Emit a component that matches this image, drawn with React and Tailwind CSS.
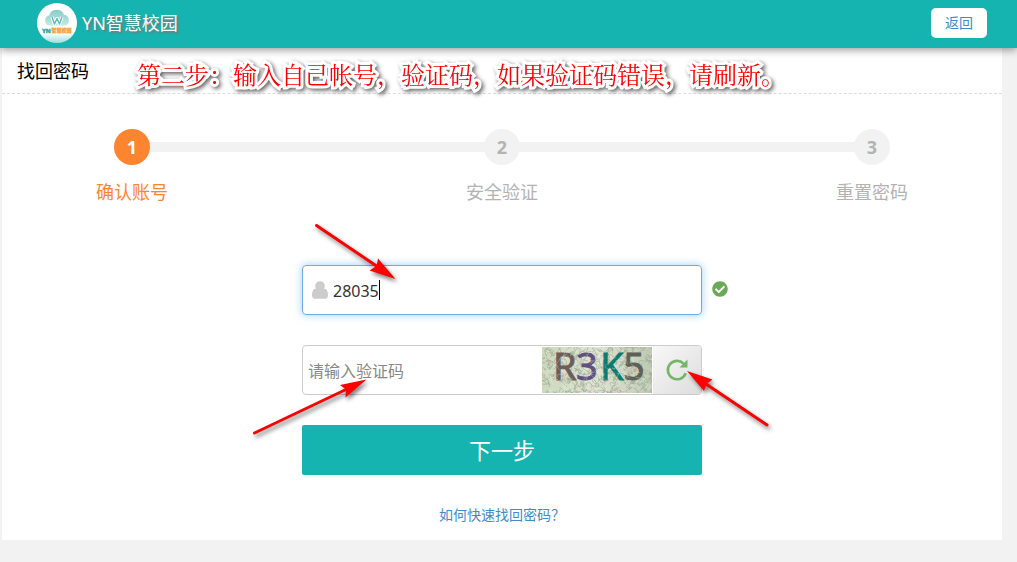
import { useState } from "react";
import { FaCheckCircle } from "react-icons/fa";

const steps = ["确认账号", "安全验证", "重置密码"];

function Logo() {
  return (
    <svg className="h-10 w-10 shrink-0" viewBox="0 0 40 40" aria-hidden="true">
      <defs>
        <linearGradient id="logoFade" x1="0" y1="0" x2="0" y2="1">
          <stop offset="0.75" stopColor="#ffffff" />
          <stop offset="1" stopColor="#9bdedb" />
        </linearGradient>
        <linearGradient id="cloudFade" x1="0" y1="0" x2="0" y2="1">
          <stop offset="0" stopColor="#86cdca" />
          <stop offset="1" stopColor="#c3e9e6" />
        </linearGradient>
      </defs>
      <circle cx="20" cy="20" r="20" fill="url(#logoFade)" />
      <path
        d="M13 22.5a5 5 0 0 1-.8-9.9A7.8 7.8 0 0 1 27 11.8a5.5 5.5 0 0 1 1 10.7z"
        fill="url(#cloudFade)"
      />
      <path
        d="M15 14l2.500 7 2.500-5.500 2.500 5.500 2.500-7"
        fill="none"
        stroke="#ffffff"
        strokeWidth="3.4"
        strokeLinejoin="round"
      />
      <path
        d="M15 14l2.500 7 2.500-5.500 2.500 5.500 2.500-7"
        fill="none"
        stroke="#5dbdb9"
        strokeWidth="1.4"
        strokeLinejoin="round"
      />
      <text x="5" y="29.6" fontSize="6" fontWeight="800" fill="#22aaa5" stroke="#22aaa5" strokeWidth="0.4">
        YN
      </text>
      <text x="14.5" y="29.4" fontSize="5" fontWeight="800" fill="#f7a541" stroke="#f7a541" strokeWidth="0.3">
        智慧校园
      </text>
    </svg>
  );
}

function UserIcon() {
  return (
    <svg className="h-5 w-4 shrink-0 text-[#cccccc]" viewBox="0 64 1280 1536" fill="currentColor" aria-hidden="true">
      <path d="M1280 1271q0 109-62.5 187t-150.5 78h-854q-88 0-150.5-78t-62.5-187q0-85 8.500-160.500t31.500-152 58.500-131 94-89 134.500-34.500q131 128 313 128t313-128q76 0 134.500 34.500t94 89 58.500 131 31.500 152 8.500 160.500zM1024 512q0 159-112.500 271.500t-271.500 112.500-271.500-112.500-112.500-271.500 112.500-271.500 271.500-112.500 271.500 112.500 112.500 271.500z" />
    </svg>
  );
}

function makeStrokes(count, seed) {
  let s = seed;
  const rand = () => {
    s = (s * 16807) % 2147483647;
    return s / 2147483647;
  };
  return Array.from({ length: count }, () => {
    const x = rand() * 114 - 2;
    const y = rand() * 50 - 2;
    const d = () => Math.round(rand() * 14 - 7);
    return `M${x.toFixed(1)} ${y.toFixed(1)}q${d()} ${d()} ${d()} ${d()}`;
  }).join("");
}

const darkNoise = makeStrokes(330, 71);
const lightNoise = makeStrokes(140, 913);
const pinkNoise = makeStrokes(50, 377);

function Captcha() {
  return (
    <svg className="h-[46px] w-[110px] shrink-0 overflow-visible" viewBox="0 0 110 46" role="img" aria-label="验证码">
      <defs>
        <linearGradient id="captchaBase">
          <stop offset="0" stopColor="#cbd8bd" />
          <stop offset="0.5" stopColor="#e0e4d5" />
          <stop offset="1" stopColor="#bdc9b2" />
        </linearGradient>
        <clipPath id="captchaArea">
          <rect width="110" height="46" />
        </clipPath>
      </defs>
      <rect width="110" height="46" fill="url(#captchaBase)" />
      <g clipPath="url(#captchaArea)" fill="none" strokeWidth="0.8">
        <path d={darkNoise} stroke="#98aa8e" opacity="0.75" />
        <path d={pinkNoise} stroke="#d5aaa5" opacity="0.7" />
      </g>
      <g fontFamily="Noto Sans, sans-serif" fontSize="38" fontWeight="400" strokeWidth="0.8">
        <text x="11" y="33" fill="#6d5d56" stroke="#6d5d56">R</text>
        <text x="34" y="33" fill="#60507f" stroke="#60507f">3</text>
        <text x="58" y="33" fill="#087c72" stroke="#087c72">K</text>
        <text x="81" y="33" fill="#5d6057" stroke="#5d6057">5</text>
      </g>
      <g clipPath="url(#captchaArea)">
        <path d={lightNoise} fill="none" stroke="#eef0e4" strokeWidth="0.8" opacity="0.35" />
      </g>
    </svg>
  );
}

function RefreshIcon() {
  return (
    <svg className="h-6 w-6" viewBox="0 0 24 24" aria-hidden="true">
      <path d="M20.700 15.200A9.200 9.200 0 1 1 18.600 5.600" fill="none" stroke="#75b566" strokeWidth="2.600" />
      <path d="M22.500 1.500V9.500H14.500z" fill="#75b566" />
    </svg>
  );
}

function Arrows() {
  return (
    <svg
      className="pointer-events-none absolute -top-[55px] -left-[62px] h-[240px] w-[540px] max-w-none drop-shadow-[2px_3px_2px_rgba(0,0,0,0.5)]"
      viewBox="240 210 540 240"
      fill="#ff0000"
      stroke="#ff0000"
      aria-hidden="true"
    >
      <g strokeWidth="3" strokeLinecap="round">
        <path d="M316.500 225.500L378 267" />
        <path d="M254.500 433L347 389" />
        <path d="M767 425L706 384" />
      </g>
      <g stroke="none">
        <path d="M395.500 279L378 258.500L376.500 266L369.500 270.500z" />
        <path d="M366.500 379.500L340 385L346 389.500L345.500 397.500z" />
        <path d="M687 371L712.500 379.500L706.500 384L704 391z" />
      </g>
    </svg>
  );
}

export default function App() {
  const [account, setAccount] = useState("28035");

  return (
    <div className="min-h-screen bg-[#f2f2f2] font-['Noto_Sans','Noto_Sans_CJK_SC',sans-serif]">
      <header className="relative z-10 flex h-12 items-center justify-between bg-[#15b4b1] pr-[30px] pl-[37px] shadow-[0_2px_8px_rgba(0,0,0,0.4)]">
        <div className="flex items-center gap-[5px] pb-0.5">
          <Logo />
          <h1 className="text-lg leading-6 text-white [text-shadow:2px_2px_2px_#777777]">YN智慧校园</h1>
        </div>
        <button type="button" className="mb-0.5 h-[30px] w-14 rounded-[5px] bg-white text-sm leading-5 text-[#428bca]">
          返回
        </button>
      </header>

      <main className="mr-[15px] ml-0.5 bg-white pb-[15px]">
        <div className="relative flex h-[46px] items-center border-b border-dashed border-[#dddddd] pl-[15px]">
          <h2 className="text-lg leading-6 text-black">找回密码</h2>
          <p className="absolute top-2.5 left-[135px] z-20 text-2xl leading-8 whitespace-nowrap text-[#ff0000] drop-shadow-[2px_2px_2px_rgba(0,0,0,0.6)] [-webkit-text-stroke:6px_#ffffff] [paint-order:stroke_fill] font-['Noto_Serif_CJK_SC','Noto_Sans_CJK_SC',serif]">
            第二步：输入自己帐号，验证码，如果验证码错误，请刷新。
          </p>
        </div>

        <ol className="flex px-28 pt-[35px]">
          {steps.map((label, index) => (
            <li key={label} className={index === 0 ? "flex" : "flex flex-1"}>
              {index > 0 && <span className="mt-[13px] -mr-1 -ml-1 h-2.5 flex-1 bg-[#f2f2f2]" />}
              <div
                className={
                  index === 0
                    ? "relative flex w-9 flex-col items-center gap-[15px] text-[#ff8430]"
                    : "relative flex w-9 flex-col items-center gap-[15px] text-[#b3b3b3]"
                }
              >
                <span
                  className={
                    index === 0
                      ? "flex h-9 w-9 items-center justify-center rounded-full bg-[#ff8430] text-lg leading-6 font-bold text-white"
                      : "flex h-9 w-9 items-center justify-center rounded-full bg-[#f2f2f2] text-lg leading-6 font-bold"
                  }
                >
                  {index + 1}
                </span>
                <span className="text-lg leading-6 whitespace-nowrap">{label}</span>
              </div>
            </li>
          ))}
        </ol>

        <form className="relative mx-auto mt-[61px] w-[400px]" onSubmit={(e) => e.preventDefault()}>
          <div className="relative flex h-[50px] items-center gap-[5px] rounded-[4px] border border-[#66afe9] pl-[9px] shadow-[0_0_8px_rgba(102,175,233,0.6)]">
            <UserIcon />
            <input
              type="text"
              aria-label="账号"
              value={account}
              onChange={(e) => setAccount(e.target.value)}
              className="h-10 min-w-0 flex-1 pt-0.5 text-base leading-6 text-[#333333] caret-transparent outline-none"
            />
            <span className="absolute top-3.5 left-[76px] h-5 w-px bg-black" />
            <FaCheckCircle className="absolute top-[15px] -right-[27px] h-4 w-4 text-[#69aa56]" />
          </div>

          <div className="mt-[30px] flex h-[50px] items-center rounded-[4px] border border-[#cccccc]">
            <input
              type="text"
              aria-label="验证码"
              placeholder="请输入验证码"
              className="h-10 min-w-0 flex-1 px-[5px] pt-0.5 text-base leading-6 text-[#333333] outline-none placeholder:text-[#888888]"
            />
            <Captcha />
            <button
              type="button"
              aria-label="刷新验证码"
              className="ml-px flex h-12 w-12 items-center justify-center rounded-r-[3px] bg-linear-to-br from-[#f8f8f8] to-[#dddddd]"
            >
              <RefreshIcon />
            </button>
          </div>

          <button type="submit" className="mt-[30px] h-[50px] w-full rounded-[2px] bg-[#15b4b1] text-[22px] leading-8 text-white">
            下一步
          </button>
          <Arrows />
        </form>

        <p className="mt-[30px] text-center text-sm leading-5">
          <a href="#help" className="text-[#428bca]">如何快速找回密码？</a>
        </p>
      </main>
    </div>
  );
}
